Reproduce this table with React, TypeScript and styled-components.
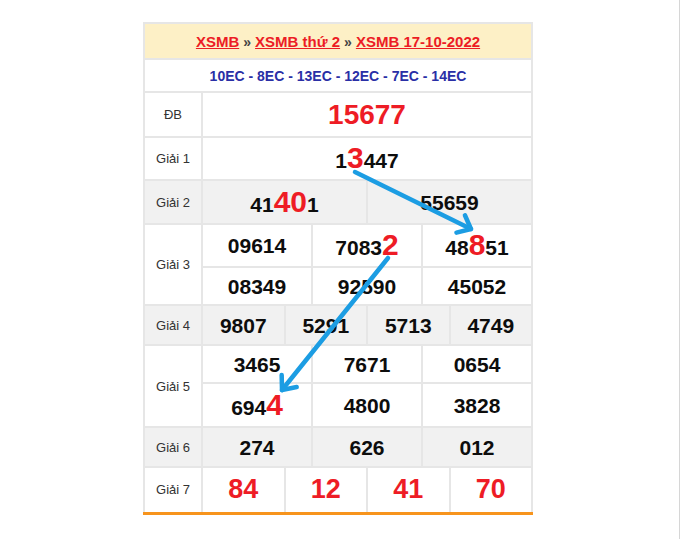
import React from 'react';
import styled, { createGlobalStyle } from 'styled-components';

const Global = createGlobalStyle`
  html, body { margin: 0; padding: 0; background: #ffffff; }
  body { font-family: "Liberation Sans", Arial, sans-serif; }
`;

const Page = styled.div`
  box-sizing: border-box;
  width: 680px;
  height: 539px;
  border-right: 1px solid #d6d6d6;
  padding: 22px 0 0 143px;
  background: #ffffff;
`;

const Board = styled.div`
  position: relative;
  width: 390px;
`;

const Table = styled.table`
  width: 390px;
  border-collapse: collapse;
  table-layout: fixed;
  border: 2px solid #e4e4e4;
  border-bottom: 3px solid #f7941d;
`;

const Row = styled.tr<{ $h: number; $alt?: boolean }>`
  height: ${(p) => p.$h}px;
  background: ${(p) => (p.$alt ? '#f1f1f1' : '#ffffff')};
`;

const HeadCell = styled.td`
  background: #fdf0c6;
  text-align: center;
  border: 2px solid #e6e6e6;
  padding: 0;
  font-size: 15px;
  font-weight: bold;
  color: #333;
`;

const Crumb = styled.a`
  color: #ec1c24;
  text-decoration: underline;
  cursor: pointer;
`;

const Sep = styled.span`
  color: #444;
  margin: 0 4px;
  font-size: 14px;
`;

const CodeCell = styled.td`
  text-align: center;
  border: 2px solid #e6e6e6;
  padding: 0;
  font-size: 14px;
  font-weight: bold;
  color: #2a2fa6;
`;

const Label = styled.td`
  text-align: center;
  border: 2px solid #e6e6e6;
  padding: 0;
  font-size: 13px;
  color: #333;
`;

const NumCell = styled.td<{ $size?: number; $red?: boolean }>`
  text-align: center;
  vertical-align: middle;
  border: 2px solid #e6e6e6;
  padding: 0;
  font-size: ${(p) => p.$size ?? 21}px;
  font-weight: bold;
  line-height: 1;
  color: ${(p) => (p.$red ? '#ee1c25' : '#0d0d0d')};
  white-space: nowrap;
`;

const Hot = styled.span`
  color: #ee1c25;
  font-size: 30px;
  line-height: 0.8;
`;

const Arrows = styled.svg`
  position: absolute;
  left: -143px;
  top: -22px;
  width: 680px;
  height: 539px;
  pointer-events: none;
  overflow: visible;
`;

function Num({ v }: { v: string }) {
  const parts = v.split(/(\[[^\]]+\])/).filter(Boolean);
  return (
    <>
      {parts.map((p, i) =>
        p.startsWith('[') ? <Hot key={i}>{p.slice(1, -1)}</Hot> : <span key={i}>{p}</span>
      )}
    </>
  );
}

type Prize = { label: string; lines: string[][]; heights: number[]; alt?: boolean; size?: number; red?: boolean };

const prizes: Prize[] = [
  { label: 'ĐB', lines: [['15677']], heights: [45], size: 28, red: true },
  { label: 'Giải 1', lines: [['1[3]447']], heights: [43] },
  { label: 'Giải 2', lines: [['41[40]1', '55659']], heights: [44], alt: true },
  {
    label: 'Giải 3',
    lines: [
      ['09614', '7083[2]', '48[8]51'],
      ['08349', '92590', '45052'],
    ],
    heights: [43, 38],
  },
  { label: 'Giải 4', lines: [['9807', '5291', '5713', '4749']], heights: [40], alt: true },
  {
    label: 'Giải 5',
    lines: [
      ['3465', '7671', '0654'],
      ['694[4]', '4800', '3828'],
    ],
    heights: [38, 44],
  },
  { label: 'Giải 6', lines: [['274', '626', '012']], heights: [40], alt: true },
  { label: 'Giải 7', lines: [['84', '12', '41', '70']], heights: [46], size: 27, red: true },
];

function Arrow({ x1, y1, x2, y2 }: { x1: number; y1: number; x2: number; y2: number }) {
  const ang = Math.atan2(y1 - y2, x1 - x2);
  const len = 15;
  const spread = (40 * Math.PI) / 180;
  const a1 = [x2 + len * Math.cos(ang + spread), y2 + len * Math.sin(ang + spread)];
  const a2 = [x2 + len * Math.cos(ang - spread), y2 + len * Math.sin(ang - spread)];
  return (
    <g stroke="#1c9de3" strokeWidth={4.5} strokeLinecap="round" strokeLinejoin="round" fill="none">
      <line x1={x1} y1={y1} x2={x2} y2={y2} />
      <polyline points={`${a1[0]},${a1[1]} ${x2},${y2} ${a2[0]},${a2[1]}`} />
    </g>
  );
}

export default function App() {
  return (
    <Page>
      <Global />
      <Board>
        <Table>
          <colgroup>
            <col style={{ width: 58 }} />
            {Array.from({ length: 12 }).map((_, i) => (
              <col key={i} />
            ))}
          </colgroup>
          <tbody>
            <Row $h={36}>
              <HeadCell colSpan={13}>
                <Crumb>XSMB</Crumb>
                <Sep>»</Sep>
                <Crumb>XSMB thứ 2</Crumb>
                <Sep>»</Sep>
                <Crumb>XSMB 17-10-2022</Crumb>
              </HeadCell>
            </Row>
            <Row $h={33}>
              <CodeCell colSpan={13}>10EC - 8EC - 13EC - 12EC - 7EC - 14EC</CodeCell>
            </Row>
            {prizes.map((p) =>
              p.lines.map((cells, li) => (
                <Row key={p.label + li} $h={p.heights[li]} $alt={p.alt}>
                  {li === 0 && <Label rowSpan={p.lines.length}>{p.label}</Label>}
                  {cells.map((c, ci) => (
                    <NumCell key={ci} colSpan={12 / cells.length} $size={p.size} $red={p.red}>
                      <Num v={c} />
                    </NumCell>
                  ))}
                </Row>
              ))
            )}
          </tbody>
        </Table>
        <Arrows viewBox="0 0 680 539">
          <Arrow x1={355} y1={172} x2={471} y2={229} />
          <Arrow x1={388} y1={258} x2={282} y2={390} />
        </Arrows>
      </Board>
    </Page>
  );
}
